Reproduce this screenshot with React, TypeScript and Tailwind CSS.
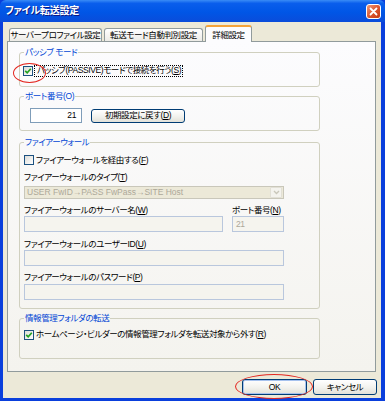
import React from "react";

const FONT =
  "font-['Liberation_Sans','Noto_Sans_CJK_JP',sans-serif] [font-feature-settings:'palt']";

function Check({ checked }: { checked: boolean }) {
  return (
    <span className="w-[10px] h-[10px] shrink-0 border border-[#1C5180] bg-[linear-gradient(135deg,#DCDCD7,#FFFFFF)] flex items-center justify-center">
      {checked && (
        <svg width="8" height="8" viewBox="0 0 8 8">
          <path d="M1.2 3.8 L3.2 5.8 L6.8 1.8" fill="none" stroke="#21A121" strokeWidth="1.7" />
        </svg>
      )}
    </span>
  );
}

function Group({
  label,
  children,
  className,
}: {
  label: string;
  children: React.ReactNode;
  className: string;
}) {
  return (
    <fieldset className={"w-[301px] border border-[#D0D0BF] rounded-[3px] " + className}>
      <legend className="ml-[4px] px-[1px] leading-[11px] text-[#0046D5]">{label}</legend>
      {children}
    </fieldset>
  );
}

function Tab({ label, w, selected }: { label: string; w: string; selected?: boolean }) {
  if (selected) {
    return (
      <div
        className={
          w +
          " h-[17px] shrink-0 whitespace-nowrap border-x border-[#919B9C] border-t-[2px] border-t-[#F4A33A] rounded-t-[3px] bg-[#FCFCFE] flex items-start justify-center pt-[3px] leading-[11px]"
        }
      >
        {label}
      </div>
    );
  }
  return (
    <div
      className={
        w +
        " h-[13px] shrink-0 whitespace-nowrap mb-px border border-b-0 border-[#919B9C] rounded-t-[3px] bg-[linear-gradient(#FFFFFF,#ECEBE6)] flex items-center justify-center leading-[11px]"
      }
    >
      {label}
    </div>
  );
}

export default function App() {
  return (
    <div
      className={
        "relative w-[385px] h-[401px] flex flex-col bg-[#0A3FDC] text-[8.5px] tracking-[-0.4px] text-black overflow-hidden " +
        FONT
      }
    >
      {/* Title bar */}
      <div className="h-[22px] shrink-0 flex items-center justify-between pl-[5px] pr-[4px] rounded-t-[6px] bg-[linear-gradient(180deg,#3A8CF6_0%,#0A5EEC_15%,#0056E6_55%,#0A4CDA_100%)]">
        <span className="text-white font-bold text-[10px] tracking-[-0.2px] leading-[12px] [text-shadow:1px_1px_#0A1883]">
          ファイル転送設定
        </span>
        <div className="w-[15px] h-[15px] rounded-[3px] border border-white bg-[linear-gradient(135deg,#F09A78,#D9532C_55%,#C23A14)] flex items-center justify-center">
          <svg width="9" height="9" viewBox="0 0 9 9">
            <path d="M1.5 1.5 L7.5 7.5 M7.5 1.5 L1.5 7.5" stroke="white" strokeWidth="1.8" strokeLinecap="round" />
          </svg>
        </div>
      </div>

      {/* Body */}
      <div className="flex-1 flex flex-col bg-[#ECE9D8] ml-[3px] mr-[4px] mb-[3px] pl-[4px] pt-[3px]">
        {/* Tabs */}
        <div className="relative z-10 -mb-px flex items-end gap-[2px] pl-[2px] h-[17px] shrink-0">
          <Tab label="サーバープロファイル設定" w="w-[93px]" />
          <Tab label="転送モード自動判別設定" w="w-[99px]" />
          <Tab label="詳細設定" w="w-[47px]" selected />
        </div>

        {/* Panel */}
        <div className="w-[369px] border border-[#919B9C] bg-[linear-gradient(#FCFCFE,#F4F3EE)] pl-[11px] pb-[12px] flex flex-col">
          <Group label="パッシブ モード" className="mt-[5px]">
            <div className="pt-[6px] pb-[9px] pl-[3px] flex items-center h-[13px] box-content">
              <Check checked />
              <span className="ml-[1px] h-[12px] pl-[2px] pr-[1px] border border-dotted border-black flex items-center leading-[11px]">
                パッシブ(PASSIVE)モードで接続を行う(<span className="underline">S</span>)
              </span>
            </div>
          </Group>

          <Group label="ポート番号(O)" className="mt-[4px]">
            <div className="pt-[6px] pb-[7px] pl-[10px] flex items-center">
              <div className="w-[52px] h-[15px] border border-[#7F9DB9] bg-white flex items-center justify-end pr-[5px] leading-[11px]">
                21
              </div>
              <div className="ml-[9px] w-[94px] h-[14px] border border-[#003C74] rounded-[3px] bg-[linear-gradient(#FFFFFF,#F3F3EF_50%,#E2E1D9)] flex items-center justify-center leading-[11px]">
                初期設定に戻す(<span className="underline">D</span>)
              </div>
            </div>
          </Group>

          <Group label="ファイアーウォール" className="mt-[6px]">
            <div className="pt-[6px] pb-[8px] pl-[4px] flex flex-col">
              <div className="h-[12px] flex items-center">
                <Check checked={false} />
                <span className="ml-[2px] leading-[11px]">
                  ファイアーウォールを経由する(<span className="underline">F</span>)
                </span>
              </div>
              <div className="mt-[5px] h-[12px] leading-[12px]">
                ファイアーウォールのタイプ(<span className="underline">T</span>)
              </div>
              <div className="mt-[3px] w-[260px] h-[13px] border border-[#C9C7BA] bg-[#ECE9D8] flex items-center">
                <span className="flex-1 pl-[2px] text-[#ACA899] tracking-normal text-[8.5px] leading-[11px]">
                  USER FwID→PASS FwPass→SITE Host
                </span>
                <div className="w-[12px] h-[11px] mr-px bg-[#F4F3EE] border border-[#E2E0D6] rounded-[1px] flex items-center justify-center">
                  <svg width="7" height="5" viewBox="0 0 7 5">
                    <path d="M1 1 L3.5 3.5 L6 1" fill="none" stroke="#C9C7BA" strokeWidth="1.3" />
                  </svg>
                </div>
              </div>
              <div className="mt-[5px] flex">
                <div className="w-[199px] flex flex-col">
                  <div className="h-[12px] leading-[12px]">
                    ファイアーウォールのサーバー名(<span className="underline">W</span>)
                  </div>
                  <div className="h-[16px] border border-[#B9C7DD] bg-[#F5F4EE]" />
                </div>
                <div className="ml-[9px] w-[52px] flex flex-col">
                  <div className="h-[12px] leading-[12px] whitespace-nowrap">
                    ポート番号(<span className="underline">N</span>)
                  </div>
                  <div className="h-[16px] border border-[#B9C7DD] bg-[#F5F4EE] pl-[3px] flex items-center text-[#ACA899] leading-[11px]">
                    21
                  </div>
                </div>
              </div>
              <div className="mt-[6px] h-[12px] leading-[12px]">
                ファイアーウォールのユーザーID(<span className="underline">U</span>)
              </div>
              <div className="w-[260px] h-[16px] border border-[#B9C7DD] bg-[#F5F4EE]" />
              <div className="mt-[5px] h-[12px] leading-[12px]">
                ファイアーウォールのパスワード(<span className="underline">P</span>)
              </div>
              <div className="mt-px w-[260px] h-[16px] border border-[#B9C7DD] bg-[#F5F4EE]" />
            </div>
          </Group>

          <Group label="情報管理フォルダの転送" className="mt-[4px]">
            <div className="pt-[4px] pb-[17px] pl-[4px] h-[13px] box-content flex items-center">
              <Check checked />
              <span className="ml-[2px] leading-[11px]">
                ホームページ・ビルダーの情報管理フォルダを転送対象から外す(<span className="underline">R</span>)
              </span>
            </div>
          </Group>
        </div>

        {/* Buttons */}
        <div className="mt-[7px] flex justify-end gap-[6px] pr-[4px]">
          <div className="w-[65px] h-[16px] border border-[#003C74] rounded-[3px] bg-[linear-gradient(#FFFFFF,#F3F3EF_50%,#E2E1D9)] shadow-[inset_0_0_0_1px_#A6C2EE] flex items-center justify-center leading-[11px]">
            OK
          </div>
          <div className="w-[64px] h-[16px] border border-[#003C74] rounded-[3px] bg-[linear-gradient(#FFFFFF,#F3F3EF_50%,#E2E1D9)] flex items-center justify-center leading-[11px]">
            キャンセル
          </div>
        </div>
      </div>

      {/* Red annotation ellipses */}
      <div className="absolute left-[13px] top-[63px] w-[33px] h-[20px] rounded-[50%] border-[1.5px] border-[#E3261F]" />
      <div className="absolute left-[235px] top-[374px] w-[78px] h-[25px] rounded-[50%] border-[1.5px] border-[#E3261F]" />
    </div>
  );
}
